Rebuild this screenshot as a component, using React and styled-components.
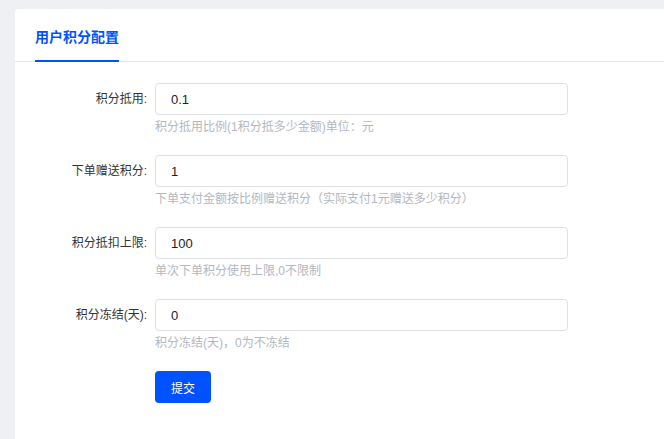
import React from 'react';
import styled, { createGlobalStyle } from 'styled-components';

const GlobalStyle = createGlobalStyle`
  html, body {
    margin: 0;
    padding: 0;
    background: #eef0f4;
    font-family: "Liberation Sans", "Noto Sans CJK SC", sans-serif;
    -webkit-font-smoothing: antialiased;
  }
  * { box-sizing: border-box; }
`;

const Page = styled.div`
  padding: 9px 0 0 15px;
  height: 439px;
  overflow: hidden;
`;

const Card = styled.div`
  background: #fff;
  border-radius: 4px 0 0 0;
  min-height: 480px;
`;

const TabBar = styled.div`
  display: flex;
  padding-left: 20px;
  border-bottom: 1px solid #e4e6ec;
`;

const Tab = styled.div`
  padding: 18px 0 13px;
  line-height: 20px;
  font-size: 14px;
  font-weight: 700;
  color: ${p => (p.$active ? '#0052ff' : '#333')};
  border-bottom: 2px solid ${p => (p.$active ? '#0052ff' : 'transparent')};
  margin-bottom: -1px;
`;

const Form = styled.form`
  padding-top: 21px;
`;

const FormItem = styled.div`
  display: grid;
  grid-template-columns: 140px 413px;
  margin-bottom: 20px;
`;

const Label = styled.label`
  padding-right: 8px;
  text-align: right;
  font-size: 12px;
  line-height: 32px;
  color: #333;
`;

const Input = styled.input`
  height: 32px;
  width: 100%;
  padding: 0 15px;
  border: 1px solid #dcdfe6;
  border-radius: 4px;
  font-family: inherit;
  font-size: 13px;
  color: #222;
  outline: none;
`;

const Help = styled.div`
  grid-column: 2;
  margin-top: 4px;
  font-size: 12px;
  line-height: 16px;
  color: #b3b7bf;
  white-space: nowrap;
`;

const SubmitRow = styled.div`
  padding-left: 140px;
`;

const Button = styled.button`
  width: 56px;
  height: 32px;
  border: none;
  border-radius: 4px;
  background: #0052ff;
  color: #fff;
  font-family: inherit;
  font-size: 12px;
  cursor: pointer;
`;

const fields = [
  { label: '积分抵用:', value: '0.1', help: '积分抵用比例(1积分抵多少金额)单位：元' },
  { label: '下单赠送积分:', value: '1', help: '下单支付金额按比例赠送积分（实际支付1元赠送多少积分）' },
  { label: '积分抵扣上限:', value: '100', help: '单次下单积分使用上限,0不限制' },
  { label: '积分冻结(天):', value: '0', help: '积分冻结(天)，0为不冻结' },
];

const App = () => {
  return (
    <Page>
      <GlobalStyle />
      <Card>
        <TabBar>
          <Tab $active>用户积分配置</Tab>
        </TabBar>
        <Form onSubmit={e => e.preventDefault()}>
          {fields.map(f => (
            <FormItem key={f.label}>
              <Label>{f.label}</Label>
              <Input defaultValue={f.value} />
              <Help>{f.help}</Help>
            </FormItem>
          ))}
          <SubmitRow>
            <Button type="submit">提交</Button>
          </SubmitRow>
        </Form>
      </Card>
    </Page>
  );
};

export default App;
